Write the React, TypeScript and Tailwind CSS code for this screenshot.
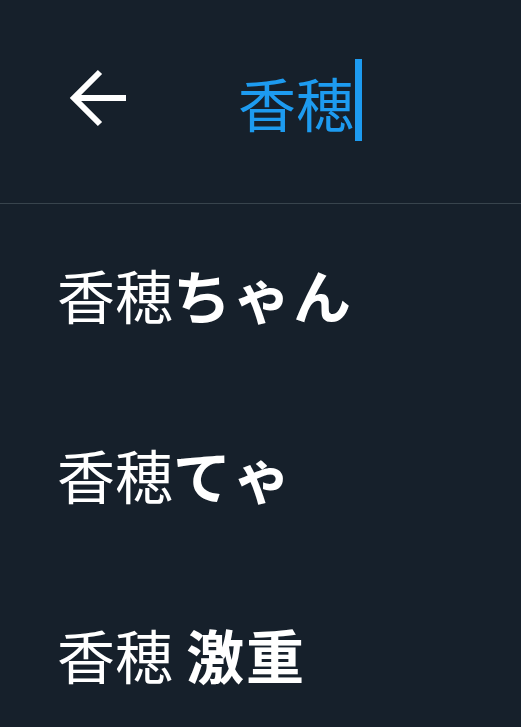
import React from 'react'

const suggestions = [
  { base: '香穂', rest: 'ちゃん' },
  { base: '香穂', rest: 'てゃ' },
  { base: '香穂 ', rest: '激重' },
]

const BackArrow = () => (
  <svg width="60" height="60" viewBox="0 0 60 60" fill="none" stroke="#ffffff" strokeWidth="6" strokeLinecap="butt" strokeLinejoin="miter">
    <path d="M5 29 H58" />
    <path d="M32 3 L6 29 L32 55" />
  </svg>
)

export default function App() {
  return (
    <div
      className="w-[521px] h-[727px] overflow-hidden bg-[#16202b] text-white"
      style={{ fontFamily: '"Noto Sans CJK JP", "Noto Sans", sans-serif' }}
    >
      <div className="h-[204px] flex items-center border-b border-[#38444d]">
        <div className="ml-[68px] mt-[-6px] flex items-center">
          <BackArrow />
        </div>
        <div className="ml-[110px] flex items-center">
          <span className="text-[58px] leading-none text-[#1d9bf0]">香穂</span>
          <span className="ml-[1px] mt-[-4px] w-[7px] h-[82px] bg-[#1d9bf0]" />
        </div>
      </div>
      <div className="flex flex-col">
        {suggestions.map((s, i) => (
          <div key={i} className="h-[180px] flex items-center pl-[57px]">
            <span className="text-[58px] leading-none whitespace-pre">
              <span className="font-normal">{s.base}</span>
              <span className="font-bold tracking-[2px]">{s.rest}</span>
            </span>
          </div>
        ))}
      </div>
    </div>
  )
}
